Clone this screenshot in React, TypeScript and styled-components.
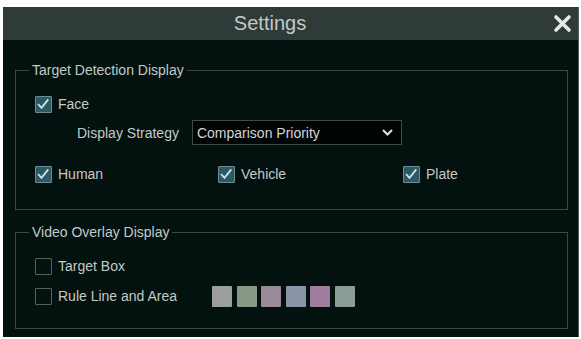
import React from 'react';
import styled, { createGlobalStyle } from 'styled-components';

const GlobalStyle = createGlobalStyle`
  body {
    margin: 0;
    background: #ffffff;
    font-family: "Liberation Sans", Arial, sans-serif;
  }
`;

const Dialog = styled.div`
  margin: 7px 0 0 3px;
  width: 576px;
  height: 330px;
  display: flex;
  flex-direction: column;
  background: #03110f;
  border-right: 1px solid #4c5c5a;
  box-sizing: border-box;
`;

const Header = styled.div`
  height: 33px;
  flex: none;
  background: #2e3b38;
  display: flex;
  align-items: center;
  gap: 16px;
  padding-right: 6px;
`;

const Title = styled.div`
  flex: 1;
  text-align: center;
  font-size: 20px;
  color: #c4c9c7;
`;

const Close = styled.div`
  width: 19px;
  height: 19px;
  display: flex;
`;

const Body = styled.div`
  flex: 1;
  padding: 22px 10px 0 12px;
  display: flex;
  flex-direction: column;
  gap: 14px;
`;

const Group = styled.fieldset<{ $pb: number }>`
  margin: 0;
  padding: 0 0 ${(p) => p.$pb}px 19px;
  border: 1px solid #3a4846;
  width: 553px;
  box-sizing: border-box;
  display: flex;
  flex-direction: column;
`;

const Legend = styled.legend`
  margin-left: -6px;
  padding: 0 3px;
  font-size: 14px;
  line-height: 16px;
  color: #c3cac8;
`;

const Row = styled.div<{ $mt: number }>`
  margin-top: ${(p) => p.$mt}px;
  height: 22px;
  display: flex;
  align-items: center;
`;

const Columns = styled.div`
  margin-top: 18px;
  height: 22px;
  display: grid;
  grid-template-columns: 183px 185px 1fr;
  align-items: center;
`;

const Check = styled.label`
  display: flex;
  align-items: center;
  gap: 6px;
  font-size: 14px;
  color: #c3cac8;
`;

const Box = styled.span<{ $on: boolean }>`
  width: 17px;
  height: 17px;
  box-sizing: border-box;
  border: 1.5px solid ${(p) => (p.$on ? '#6f8c92' : '#56615f')};
  background: ${(p) => (p.$on ? '#2d5966' : 'transparent')};
  border-radius: 1px;
  display: flex;
`;

const StrategyRow = styled.div`
  margin-top: 5px;
  height: 25px;
  padding-left: 42px;
  display: flex;
  align-items: center;
  gap: 13px;
`;

const FieldLabel = styled.span`
  font-size: 14px;
  color: #c3cac8;
`;

const Select = styled.div`
  width: 210px;
  height: 25px;
  box-sizing: border-box;
  background: #000405;
  border: 1px solid #3c4a48;
  padding: 0 8px 0 4px;
  display: flex;
  align-items: center;
  justify-content: space-between;
  font-size: 14px;
  color: #d2d6d5;
`;

const Swatches = styled.div`
  margin-left: 35px;
  display: flex;
  gap: 4.5px;
`;

const Swatch = styled.span<{ $c: string }>`
  width: 20px;
  height: 21px;
  background: ${(p) => p.$c};
  border-radius: 1px;
`;

function CheckBox({ on, label }: { on: boolean; label: string }) {
  return (
    <Check>
      <Box $on={on}>
        {on && (
          <svg width="14" height="14" viewBox="0 0 14 14">
            <path d="M2 7 L5.5 10.8 L12.3 2.4" fill="none" stroke="#cfe3e6" strokeWidth="1.8" />
          </svg>
        )}
      </Box>
      {label}
    </Check>
  );
}

const swatchColors = ['#9c9d9c', '#8a9888', '#9a8c96', '#8a93a8', '#a07c9e', '#8b9d96'];

export default function App() {
  return (
    <>
      <GlobalStyle />
      <Dialog>
        <Header>
          <Title>Settings</Title>
          <Close>
            <svg width="19" height="19" viewBox="0 0 19 19">
              <path d="M3 3 L16 16 M16 3 L3 16" stroke="#e6e8e8" strokeWidth="3.6" strokeLinecap="round" />
            </svg>
          </Close>
        </Header>
        <Body>
          <Group $pb={24}>
            <Legend>Target Detection Display</Legend>
            <Row $mt={15}>
              <CheckBox on label="Face" />
            </Row>
            <StrategyRow>
              <FieldLabel>Display Strategy</FieldLabel>
              <Select>
                Comparison Priority
                <svg width="11" height="7" viewBox="0 0 11 7">
                  <path d="M1 1 L5.5 5.5 L10 1" fill="none" stroke="#e4e6e6" strokeWidth="2" />
                </svg>
              </Select>
            </StrategyRow>
            <Columns>
              <CheckBox on label="Human" />
              <CheckBox on label="Vehicle" />
              <CheckBox on label="Plate" />
            </Columns>
          </Group>
          <Group $pb={21}>
            <Legend>Video Overlay Display</Legend>
            <Row $mt={15}>
              <CheckBox on={false} label="Target Box" />
            </Row>
            <Row $mt={8}>
              <CheckBox on={false} label="Rule Line and Area" />
              <Swatches>
                {swatchColors.map((c) => (
                  <Swatch key={c} $c={c} />
                ))}
              </Swatches>
            </Row>
          </Group>
        </Body>
      </Dialog>
    </>
  );
}
